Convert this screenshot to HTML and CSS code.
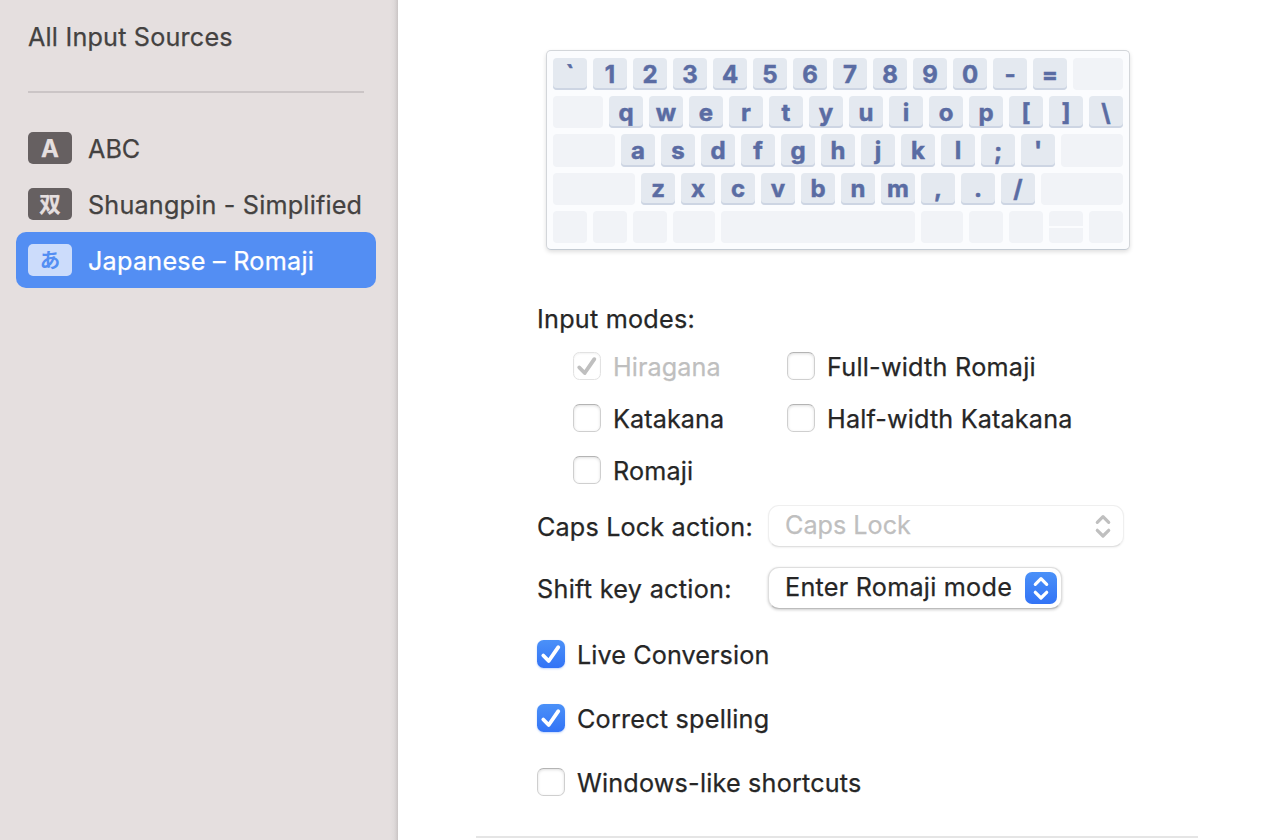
FILE: index.html
```html
<!DOCTYPE html>
<html lang="en">
<head>
<meta charset="utf-8">
<title>Input Sources</title>
<link rel="stylesheet" href="styles.css">
</head>
<body>
<div class="window">
  <aside class="sidebar">
    <div class="all"><span class="t-all">All Input Sources</span></div>
    <div class="divider"></div>
    <div class="source"><span class="badge">A</span><span class="t-abc">ABC</span></div>
    <div class="source"><span class="badge cjk">双</span><span class="t-shuang">Shuangpin - Simplified</span></div>
    <div class="source selected"><span class="badge cjk kana">あ</span><span class="t-jp">Japanese – Romaji</span></div>
  </aside>
  <main class="pane">
    <div class="keyboard">
      <div class="row"><b>`</b><b>1</b><b>2</b><b>3</b><b>4</b><b>5</b><b>6</b><b>7</b><b>8</b><b>9</b><b>0</b><b>-</b><b>=</b><i class="grow"></i></div>
      <div class="row"><i class="grow"></i><b>q</b><b>w</b><b>e</b><b>r</b><b>t</b><b>y</b><b>u</b><b>i</b><b>o</b><b>p</b><b>[</b><b>]</b><b>\</b></div>
      <div class="row home"><i class="grow"></i><b>a</b><b>s</b><b>d</b><b>f</b><b>g</b><b>h</b><b>j</b><b>k</b><b>l</b><b>;</b><b>'</b><i class="grow"></i></div>
      <div class="row lower"><i class="grow"></i><b>z</b><b>x</b><b>c</b><b>v</b><b>b</b><b>n</b><b>m</b><b>,</b><b>.</b><b>/</b><i class="grow"></i></div>
      <div class="row"><i></i><i></i><i></i><i class="cmd"></i><i class="grow"></i><i class="cmd"></i><i></i><i></i><i class="arrows"></i><i></i></div>
    </div>
    <div class="form">
      <div class="heading"><span class="t-modes">Input modes:</span></div>
      <div class="modes">
        <label class="check off"><span class="box"><svg viewBox="0 0 28 28"><path d="M6.3 15.5 11.7 21 21.3 7.2"/></svg></span><span class="t-hira">Hiragana</span></label>
        <label class="check"><span class="box"></span><span class="t-full">Full-width Romaji</span></label>
        <label class="check"><span class="box"></span><span class="t-kata">Katakana</span></label>
        <label class="check"><span class="box"></span><span class="t-half">Half-width Katakana</span></label>
        <label class="check"><span class="box"></span><span class="t-roma">Romaji</span></label>
      </div>
      <div class="field"><span class="name"><span class="t-caps">Caps Lock action:</span></span>
        <div class="popup disabled"><span class="t-capsv">Caps Lock</span><span class="stepper"><svg viewBox="0 0 32 32"><path d="M10.3 12.4 16 6.7 21.7 12.4M10.3 20.3 16 26 21.7 20.3"/></svg></span></div>
      </div>
      <div class="field"><span class="name"><span class="t-shift">Shift key action:</span></span>
        <div class="popup"><span class="t-enter">Enter Romaji mode</span><span class="stepper"><svg viewBox="0 0 32 32"><path d="M10.3 12.4 16 6.7 21.7 12.4M10.3 20.3 16 26 21.7 20.3"/></svg></span></div>
      </div>
      <div class="options">
        <label class="check"><span class="box on"><svg viewBox="0 0 28 28"><path d="M6.3 15.5 11.7 21 21.3 7.2"/></svg></span><span class="t-live">Live Conversion</span></label>
        <label class="check"><span class="box on"><svg viewBox="0 0 28 28"><path d="M6.3 15.5 11.7 21 21.3 7.2"/></svg></span><span class="t-spell">Correct spelling</span></label>
        <label class="check"><span class="box"></span><span class="t-win">Windows-like shortcuts</span></label>
      </div>
    </div>
    <div class="rule"></div>
  </main>
</div>
</body>
</html>
```
FILE: styles.css
```css
* { box-sizing: border-box; }
body {
  margin: 0;
  font: 25.2px/32px Inter, "Noto Sans CJK JP", sans-serif;
  color: #262626;
  background: #fff;
  -webkit-text-stroke: .25px;
}
.window { display: flex; width: 1268px; height: 840px; overflow: hidden; }
span { white-space: nowrap; }

.sidebar {
  width: 398px;
  flex: none;
  padding: 21px 21px 0 16px;
  background: linear-gradient(to left, #c9c4c4 0, #d6d1d1 2px, #dfdada 4px, #e5dfdf 8px);
  color: #444241;
}
.all { padding-left: 12px; }
.divider { height: 2px; margin: 38px 13px 27px 12px; background: #cbc5c6; }
.source { display: flex; align-items: center; gap: 16px; width: 360px; height: 56px; padding-left: 12px; border-radius: 10px; }
.source > span:last-child { padding-top: 2px; }
.selected { background: #538ef3; color: #fff; }
.badge {
  width: 44px;
  height: 32px;
  flex: none;
  border-radius: 5px;
  background: #666061;
  color: #e5dfdf;
  font-size: 24px;
  line-height: 34px;
  font-weight: 700;
  text-align: center;
}
.cjk { font: 700 21.5px/30px "Noto Sans CJK SC", sans-serif; }
.kana { font: 700 20.5px/30px "Noto Sans CJK JP", sans-serif; background: #ccdcfb; color: #538ef3; -webkit-text-stroke: 0; }

.pane { flex: 1; padding: 50px 70px 0 78px; }
.keyboard {
  display: flex;
  flex-direction: column;
  gap: 6px;
  width: 584px;
  height: 200px;
  margin-left: 70px;
  padding: 7px 6px 6px;
  border: 1px solid #d3d6da;
  border-bottom-color: #c3cad2;
  border-radius: 5px;
  background: #fbfcfe;
  box-shadow: 0 2px 4px rgba(0, 0, 0, .13);
}
.row { display: flex; gap: 6px; height: 32px; }
.home { height: 33px; }
.row b, .row i { width: 34px; flex: none; border-radius: 4px; background: #f1f3f7; }
.row b {
  background: #e4e9f0;
  box-shadow: inset 0 -2px 0 #cdd5e3;
  color: #5a6ca3;
  font-size: 24px;
  line-height: 34px;
  font-weight: 700;
  text-align: center;
  -webkit-text-stroke: .5px;
}
.lower b { line-height: 32px; }
.row .grow { flex: 1; }
.row .cmd { width: 42px; }
.row .arrows { background: linear-gradient(#f1f3f7 15px, #fbfcfe 15px 17px, #f1f3f7 17px); }

.form { padding: 53px 0 0 61px; }
.modes { display: grid; grid-template-columns: 214px auto; gap: 20px 0; padding: 15px 0 0 36px; }
.check { display: flex; align-items: center; gap: 12px; height: 32px; }
.check > span:last-child { padding-top: 2px; }
.box {
  width: 28px;
  height: 28px;
  flex: none;
  border: 1px solid #cfcfcf;
  border-top-color: #b4b4b4;
  border-radius: 6.5px;
  background: #fff;
  box-shadow: inset 0 1px 3px rgba(0, 0, 0, .13);
}
.box svg { display: block; width: 28px; height: 28px; margin: -1px; fill: none; stroke: #bfbfbf; stroke-width: 3.9; stroke-linecap: round; stroke-linejoin: round; }
.off { color: #bfbfbf; }
.off .box { border-color: #e2e2e2; box-shadow: inset 0 1px 2px rgba(0, 0, 0, .05); }
.box.on { border: 0; background: linear-gradient(#4b91f8, #3273f6); box-shadow: 0 1px 2px rgba(50, 115, 246, .3); }
.on svg { margin: 0; stroke: #fff; stroke-width: 3.8; }
.field { display: flex; height: 42px; margin-bottom: 20px; }
.modes + .field { margin-top: 19px; }
.name { width: 231px; padding-top: 6px; }
.popup {
  display: flex;
  justify-content: space-between;
  width: 294px;
  height: 42px;
  padding: 4px 4px 4px 16px;
  border: 1px solid #dedede;
  border-bottom-color: #bcbcbc;
  border-radius: 11px;
  background: #fff;
  box-shadow: 0 1px 3px rgba(0, 0, 0, .2);
}
.popup > span:first-child { margin-top: -1px; }
.disabled { width: 356px; color: #bfbfbf; border-color: #efefef; border-bottom-color: #e0e0e0; box-shadow: 0 1px 2px rgba(0, 0, 0, .06); }
.stepper { width: 32px; height: 32px; border-radius: 7px; background: linear-gradient(#4b91f8, #3273f6); }
.stepper svg { display: block; fill: none; stroke: #fff; stroke-width: 3.2; stroke-linecap: round; stroke-linejoin: round; }
.disabled .stepper { background: none; }
.disabled svg { stroke: #bfbfbf; }
.options { display: grid; gap: 32px; padding-top: 9px; }
.rule { height: 2px; margin-top: 38px; background: #e5e5e5; }

.t-all, .t-shuang, .t-win { letter-spacing: .19px; }
.t-jp, .t-full, .t-modes, .t-enter { letter-spacing: .24px; }
.t-hira, .t-kata, .t-live { letter-spacing: .09px; }
.t-half, .t-caps, .t-roma { letter-spacing: .16px; }
.t-shift { letter-spacing: .3px; }
.t-spell { letter-spacing: .22px; }
```
